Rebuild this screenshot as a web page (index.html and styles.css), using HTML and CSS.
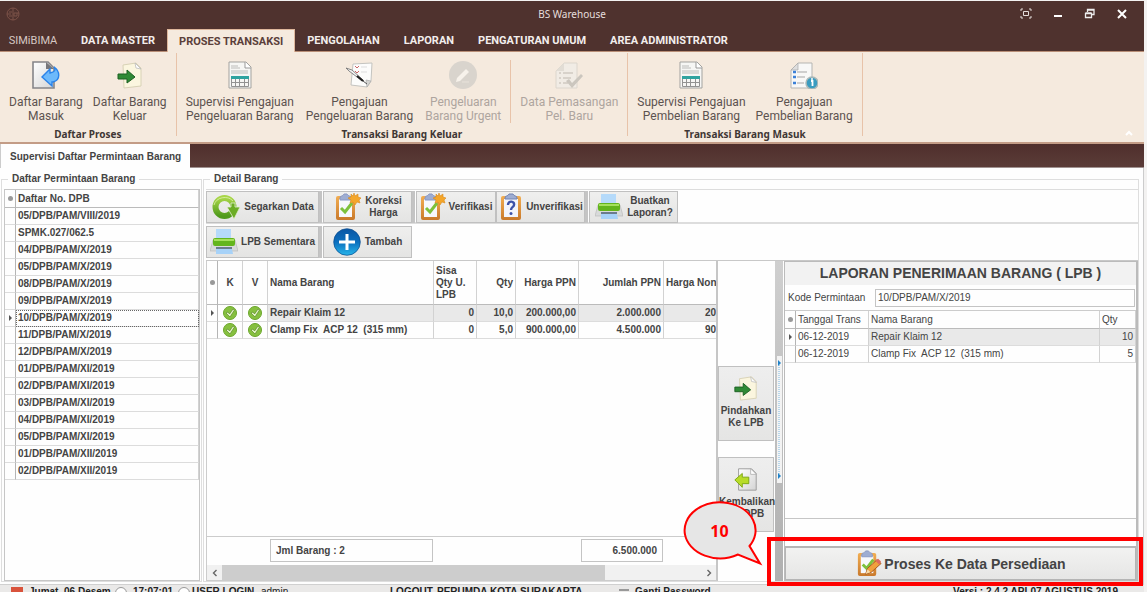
FILE: index.html
```html
<!DOCTYPE html>
<html lang="id">
<head>
<meta charset="utf-8">
<title>BS Warehouse</title>
<link rel="stylesheet" href="styles.css">
</head>
<body>
<svg class="defs" aria-hidden="true">
  <defs>
    <linearGradient id="page" x1="0" y1="0" x2="1" y2="1"><stop offset="0" stop-color="#fff"/><stop offset="1" stop-color="#d4d4d4"/></linearGradient>
    <linearGradient id="green" x1="0" y1="0" x2="0" y2="1"><stop offset="0" stop-color="#a8d648"/><stop offset="1" stop-color="#4f9a1c"/></linearGradient>
    <linearGradient id="blue" x1="0" y1="0" x2="0" y2="1"><stop offset="0" stop-color="#0a56a4"/><stop offset=".5" stop-color="#0c6fbe"/><stop offset="1" stop-color="#27b5ea"/></linearGradient>
    <linearGradient id="wood" x1="0" y1="0" x2="0" y2="1"><stop offset="0" stop-color="#f2ae52"/><stop offset="1" stop-color="#c9792b"/></linearGradient>
    <symbol id="i-in" viewBox="0 0 28 28">
      <path d="M1 1h15l6 6v20H1z" fill="url(#page)" stroke="#858589" stroke-width="1.6"/>
      <path d="M14 1v7h8z" fill="#77777b"/>
      <path d="M10 16l8-8v4c5-1 6-3 4-6c6 4 7 13-1 15h-1v4z" fill="#6db9fb" stroke="#2a83ea" stroke-width="1.4"/>
    </symbol>
    <symbol id="i-out" viewBox="0 0 28 28">
      <path d="M7 4l13-2 5 5v18L8 27z" fill="#fbf6df" stroke="#d8d2b6"/>
      <path d="M19 2l1 5 5 1z" fill="#fff" stroke="#bbb" stroke-width=".8"/>
      <path d="M2 13h9v-4l8 7-8 6v-4H2z" fill="#2f8a35" stroke="#1c6023"/>
    </symbol>
    <symbol id="i-back" viewBox="0 0 28 28">
      <path d="M6 3h14l5 5v18H6z" fill="url(#page)" stroke="#999"/>
      <path d="M19 3v6h6z" fill="#fff" stroke="#aaa" stroke-width=".8"/>
      <path d="M2 15l8-7v4h7v7h-7v4z" fill="#b8dc28" stroke="#7ba60f"/>
    </symbol>
    <symbol id="i-sheet" viewBox="0 0 28 28">
      <path d="M3 1h17l5 5v21H3z" fill="#f6f6f4" stroke="#a3a3a0"/>
      <path d="M19 1v6h6" fill="#fff" stroke="#999"/>
      <path d="M5 5h7M5 7h9M5 10h17M5 12h17" stroke="#bcbcba"/>
      <path d="M5 15h18v3H5z" fill="#2fa3a0"/>
      <path d="M5.500 18v7.500h17V18M5 21.500h18M9.500 18v8M13.500 18v8M18.500 18v8" stroke="#929292" fill="none"/>
    </symbol>
    <symbol id="i-note" viewBox="0 0 28 28">
      <path d="M7 3l19-1-1 18-4 6-16-2z" fill="#fcfcfb" stroke="#c4c4c0"/>
      <path d="M20 19l5 1-4 6z" fill="#d5d5d2" stroke="#aaa" stroke-width=".7"/>
      <path d="M9 5l2 2 2-2M9 10l2 2 2-2" stroke="#c66" fill="none"/><path d="M15 6h6M15 11h6" stroke="#ddd"/>
      <path d="M0 7l6 2 10 9 2 2-3-1L3 10z" fill="#f2f2f2" stroke="#6e6e6e" stroke-width=".8"/>
      <path d="M11 15l6 5" stroke="#222" stroke-width="2"/><path d="M17 20l4 3" stroke="#555"/>
    </symbol>
    <symbol id="i-pencil" viewBox="0 0 28 28">
      <circle cx="14" cy="14" r="14" fill="#d9d4cd"/>
      <path d="M8 17l9-9 3 3-9 9-4 1z" fill="#f7f2eb"/><path d="M13 21h7" stroke="#e8e2da"/>
    </symbol>
    <symbol id="i-check" viewBox="0 0 28 28">
      <path d="M9 2h13v25H1V10z" fill="#f1ece5" stroke="#dcd6cd"/>
      <path d="M9 2v8H1z" fill="#e2ddd5"/>
      <path d="M4 12h2M4 17h2M4 22h2M8 12h10M8 17h8M8 22h5" stroke="#cfc9c1" stroke-width="1.400"/>
      <path d="M11 20l3-2 3 4 9-9 2 2-11 12z" fill="#cbc6be"/>
    </symbol>
    <symbol id="i-info" viewBox="0 0 28 28">
      <path d="M8 2h14v25H1V9z" fill="#f8f8f7" stroke="#b5b5b2"/><path d="M8 2v7H1z" fill="#dedede" stroke="#aaa" stroke-width=".7"/>
      <path d="M3 11h3M3 16h3M3 22h3" stroke="#3b80d8" stroke-width="2.600"/><path d="M7 11h10M7 16h8M7 22h7" stroke="#a5a5a5"/>
      <circle cx="22" cy="22" r="6" fill="#3a9cc0" stroke="#aab8b8" stroke-width="1.500"/>
      <path d="M21 20h1.500v5" stroke="#fff" stroke-width="1.800" fill="none"/><circle cx="22" cy="18" r="1" fill="#fff"/>
    </symbol>
    <symbol id="i-refresh" viewBox="0 0 28 28">
      <circle cx="12.500" cy="14" r="9" fill="none" stroke="url(#green)" stroke-width="6"/>
      <path d="M19 10h4v4h5l-6 12-7-12h4z" fill="#6cad25" stroke="#e4efd2" stroke-width=".8"/>
      <path d="M2 12a11 10 0 0 1 19-4" stroke="#d3ec9c" stroke-width="1" fill="none"/>
    </symbol>
    <symbol id="i-clip" viewBox="0 0 28 28">
      <rect x="3" y="3" width="19" height="24" rx="2" fill="url(#wood)"/><path d="M6 6h13v18H6z" fill="#f7f8fc"/>
      <path d="M7 5c0-3 3-1 4-4h3c1 3 4 1 4 4v2H7z" fill="#9eadd2" stroke="#8a99c4"/>
      <path d="M8 15l4 4 7-9" fill="none" stroke="#7dc13c" stroke-width="3"/>
    </symbol>
    <symbol id="i-clipstar" viewBox="0 0 28 28">
      <use href="#i-clip"/>
      <path d="M21 0l1 3 3-2v3l3 1-2 2 1 3-3-1-2 3-2-3-3 1 1-3-3-2 3-1v-3l2 2z" fill="#f4a62a" stroke="#d98a1c" stroke-width=".6"/>
    </symbol>
    <symbol id="i-clippen" viewBox="0 0 28 28">
      <use href="#i-clip"/>
      <path d="M11 25l2-6 10-9 4 4-10 9z" fill="#f0a03c" stroke="#a8571f"/><path d="M21 11l3-2 3 3-2 3z" fill="#dd695f"/><path d="M11 25l2-5 3 3z" fill="#f8dba8"/>
    </symbol>
    <symbol id="i-clipq" viewBox="0 0 28 28">
      <rect x="4" y="3" width="20" height="24" rx="2" fill="url(#wood)"/><path d="M7 6h14v18H7z" fill="#f3f5fc"/>
      <path d="M8 5c0-3 3-1 4-4h4c1 3 4 1 4 4v1H8z" fill="#9eadd2" stroke="#7182b3"/>
      <path d="M11 12c0-5 7-4 6 0c0 2-3 2-3 5" fill="none" stroke="#3d52a8" stroke-width="2.400"/><circle cx="14" cy="20.500" r="1.500" fill="#3d52a8"/>
    </symbol>
    <symbol id="i-print" viewBox="0 0 28 28">
      <path d="M3 12h22l3 11H0z" fill="#d8dada" stroke="#b5b5b5" stroke-width=".6"/>
      <path d="M6 1h15v11H6z" fill="#b5dafa"/><rect x="3" y="10" width="22" height="8" rx="2" fill="#63b51c"/><path d="M4 11h20v2H4z" fill="#a5e05c"/>
      <path d="M6 19h16v2H6z" fill="#6b7c8c"/><path d="M6 21h16l1 5H6z" fill="#a7d2f8"/>
    </symbol>
    <symbol id="i-plus" viewBox="0 0 28 28">
      <circle cx="14" cy="14" r="13.300" fill="url(#blue)" stroke="#0b4c8e" stroke-width=".7"/>
      <path d="M14 6v16M6 14h16" stroke="#fff" stroke-width="3"/>
    </symbol>
    <symbol id="i-ok" viewBox="0 0 14 14">
      <circle cx="7" cy="7" r="6.500" fill="#86c03f" stroke="#6aa52b"/><path d="M3 7l2-1 1.500 2L10 3l1.500 1L7 11z" fill="#e6f4cc" stroke="#5a8b28" stroke-width=".7"/>
    </symbol>
  </defs>
</svg>

<div class="app">
  <header class="titlebar">
    <svg class="logo" viewBox="0 0 14 14"><circle cx="7" cy="7" r="6" fill="none" stroke="#7d5248"/><path d="M7 1v12M3 5h3M3 9h3M5 7H1M8 6h3v3H8zM11 6h2" stroke="#7d5248" fill="none"/></svg>
    <h1>BS Warehouse</h1>
    <div class="winbtns">
      <button aria-label="Layar penuh"><svg viewBox="0 0 12 12"><path d="M3.500 3.500h5v4h-5zM1 3V1h2M9 1h2v2M11 8v2H9M3 10H1V8" fill="none" stroke="#e4dcda"/></svg></button>
      <button aria-label="Kecilkan"><svg viewBox="0 0 12 12"><path d="M2 8h8" stroke="#fff" stroke-width="2"/></svg></button>
      <button aria-label="Pulihkan"><svg viewBox="0 0 12 12"><path d="M1.500 5.500h6v4h-6zM3.500 4V1.500h6.500v5H8M1.500 5h6M3.500 2h6" fill="none" stroke="#eee" stroke-width="1.300"/></svg></button>
      <button aria-label="Tutup"><svg viewBox="0 0 12 12"><path d="M2 2l8 8M10 2l-8 8" stroke="#fff" stroke-width="2"/></svg></button>
    </div>
  </header>
  <nav class="menu">
    <button class="appmenu">SIMiBIMA</button>
    <button>DATA MASTER</button>
    <button class="on">PROSES TRANSAKSI</button>
    <button>PENGOLAHAN</button>
    <button>LAPORAN</button>
    <button>PENGATURAN UMUM</button>
    <button>AREA ADMINISTRATOR</button>
  </nav>
  <div class="ribbon">
    <section class="rgroup">
      <div class="rbuttons">
        <button><svg><use href="#i-in"/></svg>Daftar Barang<br>Masuk</button>
        <button><svg><use href="#i-out"/></svg>Daftar Barang<br>Keluar</button>
      </div>
      <h2>Daftar Proses</h2>
    </section>
    <section class="rgroup wide">
      <div class="rbuttons">
        <button><svg><use href="#i-sheet"/></svg>Supervisi Pengajuan<br>Pengeluaran Barang</button>
        <button><svg><use href="#i-note"/></svg>Pengajuan<br>Pengeluaran Barang</button>
        <button disabled><svg><use href="#i-pencil"/></svg>Pengeluaran<br>Barang Urgent</button>
        <span class="rsep"></span>
        <button disabled><svg><use href="#i-check"/></svg>Data Pemasangan<br>Pel. Baru</button>
      </div>
      <h2>Transaksi Barang Keluar</h2>
    </section>
    <section class="rgroup">
      <div class="rbuttons">
        <button><svg><use href="#i-sheet"/></svg>Supervisi Pengajuan<br>Pembelian Barang</button>
        <button><svg><use href="#i-info"/></svg>Pengajuan<br>Pembelian Barang</button>
      </div>
      <h2>Transaksi Barang Masuk</h2>
    </section>
    <button class="collapse" aria-label="Ciutkan pita"><svg viewBox="0 0 10 8"><path d="M2 6l3-3 3 3" fill="none" stroke="#fff" stroke-width="2"/></svg></button>
  </div>
  <div class="doctabs"><button>Supervisi Daftar Permintaan Barang</button></div>

  <main class="work">
    <fieldset class="panel left">
      <legend>Daftar Permintaan Barang</legend>
      <div class="listbox">
        <table class="grid list">
          <colgroup><col class="c-mark"><col></colgroup>
          <thead><tr><th class="m"><i class="star"></i></th><th>Daftar No. DPB</th></tr></thead>
          <tbody>
            <tr><td class="m"></td><td>05/DPB/PAM/VIII/2019</td></tr>
            <tr><td class="m"></td><td>SPMK.027/062.5</td></tr>
            <tr><td class="m"></td><td>04/DPB/PAM/X/2019</td></tr>
            <tr><td class="m"></td><td>05/DPB/PAM/X/2019</td></tr>
            <tr><td class="m"></td><td>08/DPB/PAM/X/2019</td></tr>
            <tr><td class="m"></td><td>09/DPB/PAM/X/2019</td></tr>
            <tr class="focus"><td class="m"><i class="tri"></i></td><td>10/DPB/PAM/X/2019</td></tr>
            <tr><td class="m"></td><td>11/DPB/PAM/X/2019</td></tr>
            <tr><td class="m"></td><td>12/DPB/PAM/X/2019</td></tr>
            <tr><td class="m"></td><td>01/DPB/PAM/XI/2019</td></tr>
            <tr><td class="m"></td><td>02/DPB/PAM/XI/2019</td></tr>
            <tr><td class="m"></td><td>03/DPB/PAM/XI/2019</td></tr>
            <tr><td class="m"></td><td>04/DPB/PAM/XI/2019</td></tr>
            <tr><td class="m"></td><td>05/DPB/PAM/XI/2019</td></tr>
            <tr><td class="m"></td><td>01/DPB/PAM/XII/2019</td></tr>
            <tr><td class="m"></td><td>02/DPB/PAM/XII/2019</td></tr>
          </tbody>
        </table>
      </div>
    </fieldset>

    <fieldset class="panel detail">
      <legend>Detail Barang</legend>
      <div class="toolbar">
        <button class="w-a"><svg><use href="#i-refresh"/></svg><span>Segarkan Data</span></button>
        <button class="w-b two"><svg><use href="#i-clipstar"/></svg><span>Koreksi<br>Harga</span></button>
        <button class="w-c flush"><svg><use href="#i-clipstar"/></svg><span>Verifikasi</span></button>
        <button class="w-d"><svg><use href="#i-clipq"/></svg><span>Unverifikasi</span></button>
        <button class="w-b last"><svg><use href="#i-print"/></svg><span>Buatkan<br>Laporan?</span></button>
      </div>
      <div class="toolbar second">
        <button class="w-a tight"><svg><use href="#i-print"/></svg><span>LPB Sementara</span></button>
        <button class="w-b two last"><svg><use href="#i-plus"/></svg><span>Tambah</span></button>
      </div>
      <div class="split">
        <div class="items">
          <div class="itemscroll">
            <table class="grid itemgrid">
              <colgroup><col class="c-mark"><col class="c-k"><col class="c-k"><col class="c-name"><col class="c-sisa"><col class="c-qty"><col class="c-harga"><col class="c-jumlah"><col></colgroup>
              <thead><tr><th class="m"><i class="star"></i></th><th class="c">K</th><th class="c">V</th><th>Nama Barang</th><th>Sisa<br>Qty U.<br>LPB</th><th class="r">Qty</th><th class="r">Harga PPN</th><th class="r">Jumlah PPN</th><th class="cut">Harga Non</th></tr></thead>
              <tbody>
                <tr class="sel"><td class="m"><i class="tri"></i></td><td class="c ok"><svg><use href="#i-ok"/></svg></td><td class="c ok"><svg><use href="#i-ok"/></svg></td><td>Repair Klaim 12</td><td class="r">0</td><td class="r">10,0</td><td class="r">200.000,00</td><td class="r">2.000.000</td><td class="r cut">20</td></tr>
                <tr><td class="m"></td><td class="c ok"><svg><use href="#i-ok"/></svg></td><td class="c ok"><svg><use href="#i-ok"/></svg></td><td>Clamp Fix&nbsp; ACP 12&nbsp; (315 mm)</td><td class="r">0</td><td class="r">5,0</td><td class="r">900.000,00</td><td class="r">4.500.000</td><td class="r cut">90</td></tr>
              </tbody>
            </table>
          </div>
          <div class="totals"><output class="count">Jml Barang : 2</output><output class="sum">6.500.000</output></div>
          <div class="hscroll"><button aria-label="Geser kiri"><svg viewBox="0 0 8 8"><path d="M5.500 1l-3 3 3 3" fill="none" stroke="#666" stroke-width="1.400"/></svg></button><span class="track"><span class="thumb"></span></span><button aria-label="Geser kanan"><svg viewBox="0 0 8 8"><path d="M2.500 1l3 3-3 3" fill="none" stroke="#666" stroke-width="1.400"/></svg></button></div>
        </div>
        <div class="moves">
          <button><svg><use href="#i-out"/></svg>Pindahkan<br>Ke LPB</button>
          <button><svg><use href="#i-back"/></svg>Kembalikan<br>Ke DPB</button>
        </div>
        <div class="splitter"><span class="grip"><i></i><i></i></span></div>
        <section class="lpb">
          <h2>LAPORAN PENERIMAAN BARANG ( LPB )</h2>
          <div class="kode"><label for="kode">Kode Permintaan</label><input id="kode" type="text" value="10/DPB/PAM/X/2019"></div>
          <table class="grid lpbgrid">
            <colgroup><col class="c-mark"><col class="c-tgl"><col><col class="c-q"></colgroup>
            <thead><tr><th class="m"><i class="star"></i></th><th>Tanggal Trans</th><th>Nama Barang</th><th>Qty</th></tr></thead>
            <tbody>
              <tr class="sel"><td class="m"><i class="tri"></i></td><td class="plain">06-12-2019</td><td>Repair Klaim 12</td><td class="r">10</td></tr>
              <tr><td class="m"></td><td>06-12-2019</td><td>Clamp Fix&nbsp; ACP 12&nbsp; (315 mm)</td><td class="r">5</td></tr>
            </tbody>
          </table>
          <div class="lpbfoot"></div>
          <button class="proses"><svg><use href="#i-clippen"/></svg>Proses Ke Data Persediaan</button>
          <div class="highlight"></div>
        </section>
      </div>
      <div class="callout">
        <svg viewBox="0 0 80 66"><path d="M66.500 45A35.500 28 0 1 0 55 53.500L77 62.500Z" fill="#e6e6e6" stroke="#f00" stroke-width="2"/></svg>
        <b>10</b>
      </div>
    </fieldset>
  </main>
  <footer class="status">
    <span class="s1"><i class="cal"></i>Jumat, 06 Desem</span><span class="s2"><i class="dot"></i>17:07:01</span><span class="s3"><i class="dot"></i>USER LOGIN</span><span class="s4">admin</span><span class="s5">LOGOUT</span><span class="s6">PERUMDA KOTA SURAKARTA</span><span class="s7"><i class="dash"></i>Ganti Password</span><span class="s8">Versi : 2.4.2 APL07 AGUSTUS 2019</span>
  </footer>
</div>
</body>
</html>
```

FILE: styles.css
```css
* { box-sizing: border-box; }
body { margin: 0; background: #f3f2f1; color: #444; font: 10px/12px "Liberation Sans", Arial, sans-serif; }
button { margin: 0; padding: 0; border: 0; background: none; color: inherit; font: inherit; }
svg { display: block; }
h1, h2 { margin: 0; }
.defs { position: absolute; width: 0; height: 0; }
.app { display: flex; flex-direction: column; height: 100vh; margin-right: 3px; padding-top: 1px; overflow: hidden; }

.titlebar { display: grid; grid-template-columns: 1fr auto 1fr; align-items: center; height: 26px; padding: 0 6px; background: #4f322e; color: #e6dedc; }
.titlebar h1 { font: 400 10px/14px "Noto Sans", sans-serif; }
.logo { width: 14px; height: 14px; }
.winbtns { display: flex; justify-content: flex-end; gap: 20px; padding-right: 10px; }
.winbtns svg { width: 12px; height: 12px; }

.menu { display: flex; height: 25px; padding-top: 2px; background: #4f322e; border-bottom: 1px solid #b98f77; color: #f3eeec; font: 700 11px/24px Roboto, sans-serif; }
.menu button { padding: 0 12px; height: 23px; white-space: nowrap; }
.menu .appmenu { width: 66px; margin-right: 3px; padding: 0; color: #d6c8c4; font: 400 11px/20px Roboto, sans-serif; }
.menu .on { height: 24px; background: #f5eade; border: 1px solid #dfb79c; border-bottom: 0; padding: 0 11px; color: #5b3f3a; }

.ribbon { display: flex; height: 92px; background: #f5eade; border-bottom: 2px solid #c39c86; }
.rgroup { display: flex; flex-direction: column; margin: 1px 0 6px; padding: 0 4px; border-right: 1px solid #e8c3a9; }
.rbuttons { display: flex; }
.wide .rbuttons { gap: 2px; }
.rbuttons button { padding: 8px 5px 0; color: #5c5350; font: 400 12px/14px Roboto, sans-serif; text-align: center; white-space: nowrap; }
.rbuttons svg { width: 28px; height: 28px; margin: 0 auto 6px; }
.rbuttons button:disabled { color: #aea59f; }
.rsep { width: 1px; margin: 7px 2px 0; background: #e8c3a9; }
.rgroup h2 { margin-top: 4px; color: #3f3734; font: 700 10px/14px "Noto Sans", sans-serif; text-align: center; }
.collapse { align-self: flex-end; margin: 0 10px 5px auto; }
.collapse svg { width: 10px; height: 8px; }

.doctabs { display: flex; height: 24px; background: linear-gradient(#4f2f2c, #5b3c38); border-bottom: 1px solid #a09290; }
.doctabs button { height: 24px; padding: 0 9px; background: #fefefe; border-left: 1px solid #ccc; font-weight: 700; line-height: 25px; white-space: nowrap; }

.work { flex: 1; display: flex; min-height: 0; padding: 5px 4px 2px 1px; background: #fefefe; border-right: 1px solid #ccc; border-bottom: 1px solid #d0d0d0; }
.panel { display: flex; flex-direction: column; min-width: 0; margin: 0; border: 1px solid #dedede; }
.panel legend { margin-left: 4px; padding: 0 4px; font-weight: 700; }
.left { flex: 0 0 201px; padding: 4px 1px 0 2px; }
.detail { position: relative; flex: 1; margin-left: 1px; padding: 4px 0 0 2px; }

.listbox { flex: 1; border: 1px solid #c6c6c6; min-height: 0; }
.grid { width: 100%; border-collapse: separate; border-spacing: 0; table-layout: fixed; }
.grid th, .grid td { height: 17px; padding: 0 2px; border-right: 1px solid #d2d2d2; border-bottom: 1px solid #dcdcdc; overflow: hidden; text-align: left; white-space: nowrap; font-weight: inherit; line-height: 12px; }
.grid th { height: 18px; border-bottom-color: #bbb; }
.grid .m { padding: 0; border-right-color: #b5b5b5; }
.grid .r { text-align: right; }
.grid .c { text-align: center; }
.list, .itemgrid { font-weight: 700; }
.c-mark { width: 11px; }
.star, .tri { display: block; margin: auto; }
.star { width: 5px; height: 5px; border-radius: 50%; background: #999; }
.tri { width: 3px; height: 6px; border: solid transparent; border-width: 3px 0 3px 3px; border-left-color: #555; }
.grid .focus td + td { outline: 1px dotted #666; outline-offset: -1px; }
.grid .sel td:not(.m):not(.plain):not(.ok) { background: #e9e9e9; }

.toolbar { display: flex; height: 35px; padding-top: 1px; border-top: 1px solid #ddd; border-bottom: 2px solid #ddd; }
.toolbar.second { height: 36px; border-top: 0; border-bottom: 0; padding-top: 2px; }
.toolbar button { display: flex; align-items: center; height: 32px; margin-right: 4px; padding-left: 5px; background: linear-gradient(#efefee, #e4e4e3); border: 1px solid #c0c0c0; box-shadow: 3px 0 0 #c4c4c4; font-weight: 700; text-align: center; white-space: nowrap; }
.toolbar svg { flex: none; width: 28px; height: 28px; }
.toolbar span { flex: 1; }
.toolbar .w-a { width: 113px; }
.toolbar .w-b { width: 89px; padding-left: 5px; }
.toolbar .two { padding: 0 5px 0 9px; }
.toolbar .w-c { width: 80px; padding-left: 1px; }
.toolbar .w-d { width: 89px; padding-left: 0; }
.toolbar .flush { margin-right: 0; box-shadow: none; }
.toolbar .tight { padding-left: 3px; }
.toolbar .last { box-shadow: none; }

.split { flex: 1; display: flex; min-height: 0; border-top: 1px solid #c8c8c8; }
.items { flex: 1; display: flex; flex-direction: column; min-width: 0; border-left: 1px solid #ccc; border-right: 2px solid #c6c6c6; border-bottom: 1px solid #ccc; }
.itemscroll { flex: 1; overflow: hidden; }
.itemgrid th { height: 44px; }
.itemgrid .cut { border-right: 0; }
.itemgrid td.cut { padding: 0; }
.itemgrid .ok { padding: 0; }
.ok svg { width: 14px; height: 14px; margin: 0 auto; }
.c-k { width: 25px; }
.c-name { width: 166px; }
.c-sisa { width: 43px; }
.c-qty { width: 39px; }
.c-harga { width: 63px; }
.c-jumlah { width: 85px; }
.totals { display: flex; height: 29px; padding: 2px 0 3px 63px; border-top: 1px solid #ccc; font-weight: 700; }
.totals output { border: 1px solid #c4c4c4; padding: 0 5px; line-height: 22px; }
.count { width: 163px; }
.sum { width: 82px; margin-left: 148px; text-align: right; }
.hscroll { display: flex; height: 15px; background: #f1f1f1; }
.hscroll button { width: 15px; }
.hscroll svg { width: 8px; height: 8px; margin: auto; }
.track { flex: 1; }
.thumb { display: block; width: 80%; height: 100%; background: #cdcdcd; }

.moves { flex: 0 0 57px; padding-top: 105px; }
.moves button { display: block; width: 56px; height: 75px; margin-bottom: 16px; padding-bottom: 3px; background: linear-gradient(#eee, #e5e5e4); border: 1px solid #c0c0c0; font-weight: 700; line-height: 12px; white-space: nowrap; }
.moves svg { width: 26px; height: 26px; margin: 0 auto 4px; }
.splitter { flex: 0 0 8px; display: flex; justify-content: center; padding-top: 95px; background: linear-gradient(#cfcfcf, #b0b0b0); }
.grip { display: flex; flex-direction: column; justify-content: space-between; width: 5px; height: 127px; padding: 4px 1px; background: repeating-linear-gradient(#b6d5ea 0 1px, #f5f5f5 1px 2px) center / 2px 110px no-repeat #f3f3f3; }
.grip i { width: 3px; height: 6px; border: solid transparent; border-width: 3px 0 3px 3px; border-left-color: #2182c8; }

.lpb { position: relative; flex: 0 0 354px; display: flex; flex-direction: column; margin-left: 1px; border: 1px solid #bbb; border-right: 2px solid #bbb; }
.lpb h2 { background: #f2f2f2; font: 700 14px/23px "Liberation Sans", Arial, sans-serif; text-align: center; color: #444; }
.kode { display: flex; align-items: center; height: 26px; padding: 3px 1px 3px 3px; border-bottom: 1px solid #ccc; }
.kode label { width: 87px; }
.kode input { flex: 1; min-width: 0; height: 18px; padding: 0 2px; background: #fefefe; border: 1px solid #c4c4c4; color: inherit; font: inherit; }
.c-tgl { width: 73px; }
.c-q { width: 36px; }
.lpbfoot { flex: 1; background: linear-gradient(#c6c6c6, #c6c6c6) 0 calc(100% - 27px) / 100% 1px no-repeat; }
.proses { display: flex; align-items: center; justify-content: center; gap: 2px; height: 34px; background: linear-gradient(#f2f2f1, #e6e6e5); border: 1px solid #b5b5b5; border-top-width: 2px; font: 700 14px/16px "Liberation Sans", Arial, sans-serif; }
.proses svg { width: 27px; height: 27px; }
.highlight { position: absolute; left: -18px; right: -7px; bottom: -6px; height: 49px; border: 4px solid #f00; }
.callout { position: absolute; right: 375px; bottom: 14px; width: 80px; height: 66px; }
.callout svg { width: 80px; height: 66px; }
.callout b { position: absolute; left: 0; top: 20px; width: 73px; color: #f00; font: 700 16px/20px "Open Sans", sans-serif; text-align: center; }

.status { display: flex; flex: 0 0 7px; overflow: hidden; background: #eae9e8; color: #222; font-weight: 700; line-height: 13px; white-space: nowrap; }
.status span { display: flex; gap: 6px; flex: none; }
.status i { flex: none; width: 12px; height: 12px; margin-top: 2px; }
.cal { background: #d9533c; }
.dot { border: 1px solid #999; border-radius: 50%; background: #fff; }
.status .dash { width: 10px; height: 2px; margin-top: 4px; background: #999; }
.s1 { width: 115px; padding-left: 11px; }
.s2 { width: 61px; }
.status .s3 { width: 76px; padding-left: 2px; gap: 2px; }
.s4 { width: 136px; padding-left: 9px; font-weight: 400; }
.s5 { width: 44px; padding-left: 2px; }
.s6 { width: 187px; padding-left: 5px; }
.s7 { width: 120px; }
.status .s8 { margin-left: auto; padding-right: 26px; }
```
